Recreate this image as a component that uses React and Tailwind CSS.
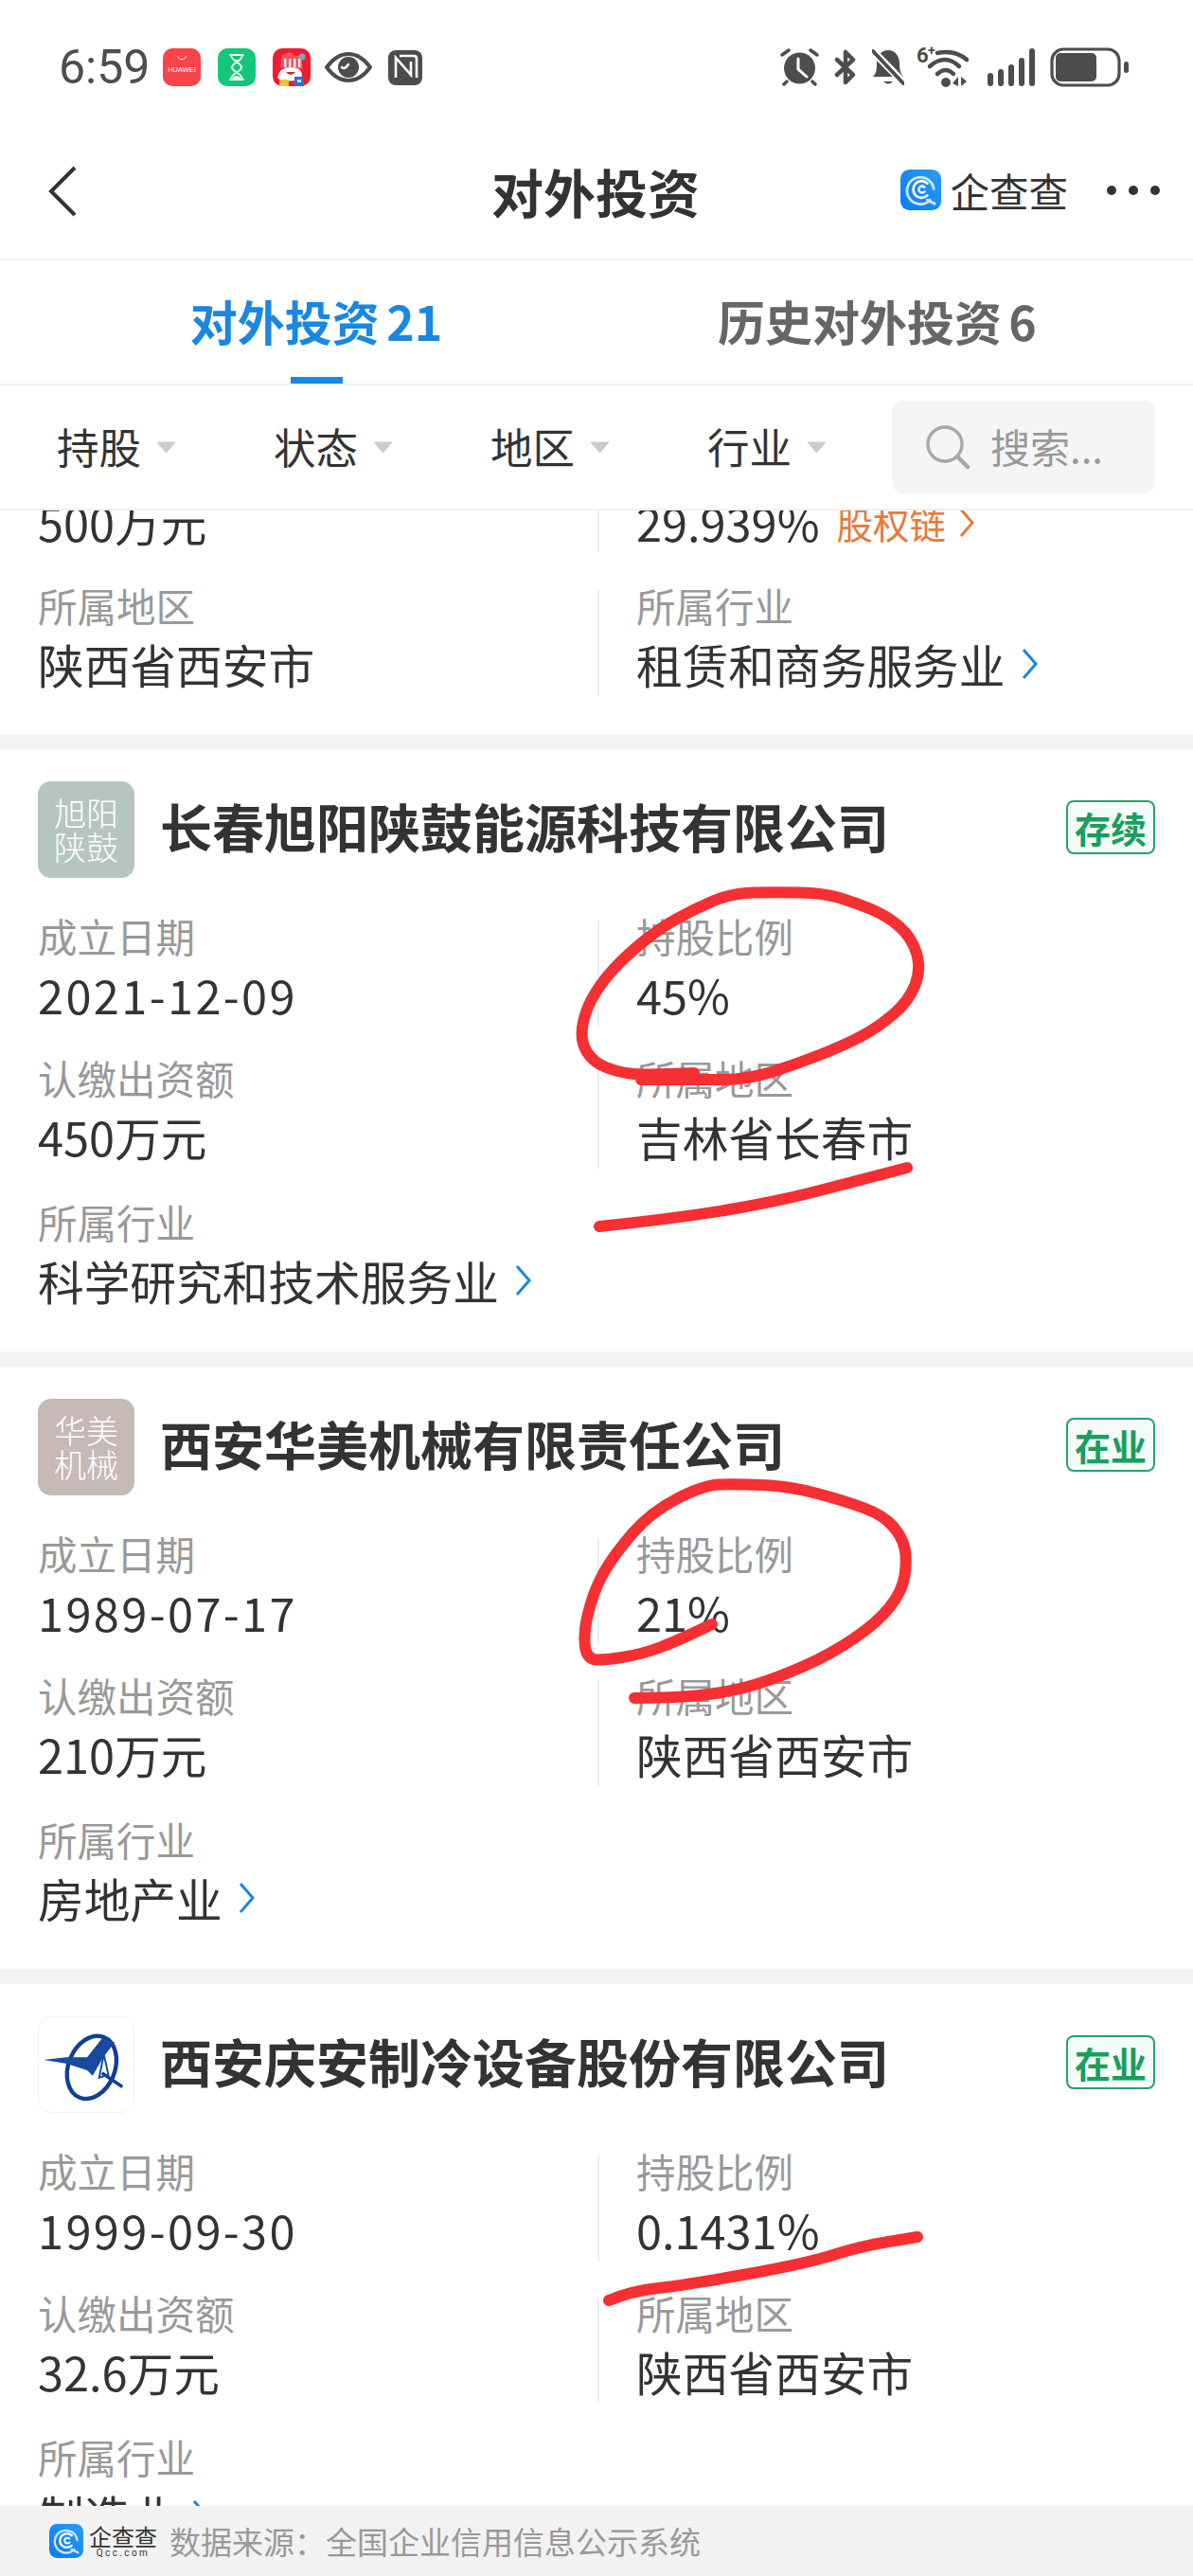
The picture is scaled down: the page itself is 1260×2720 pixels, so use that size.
import React from 'react';

const dark = '#4d4d4d';

// hand-drawn marks on the screenshot, traced in page pixels
const strokes = [
  [[677,1140],[733,1140],[790,1140],[843,1123],[893,1103],[927,1085],[960,1057],[973,1023],[963,990],[937,967],[903,953],[870,943],[820,942],[773,943],[733,960],[697,980],[660,1010],[633,1040],[617,1070],[613,1100],[627,1122],[653,1132],[677,1135],[733,1133]],
  [[633,1295],[727,1285],[827,1267],[893,1250],[958,1233]],
  [[752,1715],[717,1732],[677,1747],[637,1753],[623,1752],[617,1740],[618,1713],[630,1673],[650,1640],[687,1597],[743,1568],[777,1567],[833,1569],[893,1585],[933,1600],[953,1623],[958,1647],[953,1680],[927,1713],[877,1747],[820,1772],[777,1785],[727,1792],[670,1793]],
  [[643,2429],[667,2419],[723,2413],[852,2390],[908,2372],[969,2362]],
];

function smooth(pts) {
  let d = `M${pts[0][0]} ${pts[0][1]}`;
  for (let i = 1; i < pts.length - 1; i++) {
    const mx = (pts[i][0] + pts[i + 1][0]) / 2;
    const my = (pts[i][1] + pts[i + 1][1]) / 2;
    d += ` Q${pts[i][0]} ${pts[i][1]} ${mx} ${my}`;
  }
  const last = pts[pts.length - 1];
  return d + ` L${last[0]} ${last[1]}`;
}

function HuaweiIcon() {
  return (
    <div className="w-[40px] h-[40px] rounded-[10px] bg-[#f8444a] flex flex-col items-center">
      <svg width="14" height="8" viewBox="0 0 14 8" className="mt-[7px]">
        <path d="M2 1 Q7 9 12 1" fill="none" stroke="#fff" strokeWidth="1" />
      </svg>
      <span className="text-[7.5px] leading-[10px] mt-[3px] text-white font-['Liberation_Sans',sans-serif]">HUAWEI</span>
    </div>
  );
}

function TimerIcon() {
  return (
    <div className="w-[40px] h-[40px] rounded-[10px] bg-[#12c878] flex items-center justify-center">
      <svg width="20" height="30" viewBox="0 0 20 30">
        <path d="M3 2h14M3 28h14M4 2c0 7 11 8 11 13S4 21 4 28M16 2c0 7-11 8-11 13s11 6 11 13" fill="none" stroke="#fff" strokeWidth="1.8" strokeLinecap="round" />
        <path d="M7 7h6l-3 4zM5 27q5-6 10 0z" fill="#fff" />
      </svg>
    </div>
  );
}

function PromoIcon() {
  return (
    <svg width="40" height="40" viewBox="0 0 40 40">
      <rect width="40" height="40" rx="10" fill="#ee1c2e" />
      <path d="M8 20 L10 7 L18 4 L24 8 L30 8 L32 22 Z" fill="#f4515e" />
      <rect x="12" y="11" width="2.4" height="9" fill="#fff" />
      <rect x="17" y="11" width="2.4" height="9" fill="#fff" />
      <rect x="22" y="11" width="2.4" height="9" fill="#fff" />
      <rect x="27" y="11" width="2.4" height="9" fill="#fff" />
      <circle cx="31" cy="9" r="3.5" fill="#7fa5c9" />
      <path d="M5 31 Q7 20 18 20 Q31 20 31 29 L26 34 L10 35 Z" fill="#fff" />
      <path d="M14 25 Q19 31 24 25 Z" fill="#d8202c" />
      <rect x="7" y="33" width="10" height="7" fill="#f2c230" />
      <rect x="23" y="30" width="10" height="10" fill="#2c6fd0" />
      <rect x="26" y="33" width="4" height="3" fill="#cfe2f8" />
    </svg>
  );
}

function EyeIcon() {
  return (
    <svg width="52" height="34" viewBox="0 0 52 34">
      <path d="M3 17 C11 6 18 3 26 3 C34 3 41 6 49 17 C41 28 34 31 26 31 C18 31 11 28 3 17 Z" fill="none" stroke={dark} strokeWidth="4" strokeLinejoin="round" />
      <circle cx="26" cy="17" r="11" fill={dark} />
      <path d="M19 17 Q22 20 26 14" fill="none" stroke="#fff" strokeWidth="2.5" strokeLinecap="round" />
    </svg>
  );
}

function NfcIcon() {
  return (
    <svg width="36" height="37" viewBox="0 0 36 37">
      <rect width="36" height="37" rx="8" fill={dark} />
      <path d="M8 29 V8 L24 26 V12 M12 6 H27 Q30 6 30 9 V29" fill="none" stroke="#fff" strokeWidth="2.6" />
    </svg>
  );
}

function AlarmIcon() {
  return (
    <svg width="41" height="40" viewBox="0 0 41 40">
      <circle cx="20.5" cy="21" r="16.5" fill={dark} />
      <path d="M2 7 L9 2 M32 2 L39 7 M7 35 L4 38 M34 35 L37 38" stroke={dark} strokeWidth="3.5" strokeLinecap="round" />
      <path d="M19 11 V22 L28 30" fill="none" stroke="#fff" strokeWidth="3" strokeLinecap="round" />
    </svg>
  );
}

function BluetoothIcon() {
  return (
    <svg width="24" height="40" viewBox="0 0 24 40">
      <path d="M3 28 L20 12 L12 4 V36 L20 28 L3 12" fill="none" stroke={dark} strokeWidth="4.5" strokeLinecap="round" strokeLinejoin="round" />
    </svg>
  );
}

function BellOffIcon() {
  return (
    <svg width="34" height="40" viewBox="0 0 34 40">
      <path d="M17 2 C25 2 29 9 29 16 C29 24 31 27 33 30 H1 C4 27 5 24 5 16 C5 9 9 2 17 2 Z" fill={dark} />
      <path d="M12 35 Q17 40 22 35 Z" fill={dark} />
      <path d="M-1 1 L34 37" stroke="#fff" strokeWidth="8" />
      <path d="M1 3 L33 37" stroke={dark} strokeWidth="4" strokeLinecap="round" />
    </svg>
  );
}

function WifiIcon() {
  return (
    <div className="relative w-[55px] h-[42px]">
      <span className="absolute left-0 top-[-3px] text-[22px] leading-[24px] font-bold text-[#4d4d4d] font-['Roboto',sans-serif]">6</span>
      <span className="absolute left-[12px] top-[-5px] text-[14px] leading-[16px] font-bold text-[#4d4d4d] font-['Roboto',sans-serif]">+</span>
      <svg width="55" height="42" viewBox="0 0 55 42">
        <path d="M22 6 Q40 2 53 13" fill="none" stroke={dark} strokeWidth="4.5" strokeLinecap="round" />
        <path d="M14 20 Q30 6 45 20" fill="none" stroke={dark} strokeWidth="4.5" strokeLinecap="round" />
        <path d="M22 28 Q31 20 39 28" fill="none" stroke={dark} strokeWidth="4.5" strokeLinecap="round" />
        <circle cx="31" cy="37" r="5" fill={dark} />
        <path d="M44 31 V41 L38 38 Z M47 31 V41 L53 36 Z" fill={dark} />
      </svg>
    </div>
  );
}

function SignalIcon() {
  return (
    <svg width="51" height="40" viewBox="0 0 51 40">
      <rect x="0" y="26" width="6" height="14" rx="3" fill={dark} />
      <rect x="11" y="22" width="6" height="18" rx="3" fill={dark} />
      <rect x="22" y="17" width="6" height="23" rx="3" fill={dark} />
      <rect x="33" y="10" width="6" height="30" rx="3" fill={dark} />
      <rect x="44" y="0" width="6" height="40" rx="3" fill={dark} />
    </svg>
  );
}

function BatteryIcon() {
  return (
    <svg width="83" height="42" viewBox="0 0 83 42">
      <rect x="2" y="2" width="71" height="38" rx="12" fill="none" stroke={dark} strokeWidth="3.2" />
      <rect x="6" y="6" width="43" height="30" rx="5" fill={dark} />
      <rect x="78" y="15" width="5" height="12" rx="2.5" fill={dark} />
    </svg>
  );
}

function QccLogo({ size }) {
  return (
    <svg width={size} height={size} viewBox="0 0 44 44" className="shrink-0">
      <defs>
        <linearGradient id="qcc" x1="0" y1="1" x2="1" y2="0">
          <stop offset="0" stopColor="#0a7bf2" />
          <stop offset="1" stopColor="#2a9cf5" />
        </linearGradient>
      </defs>
      <rect width="44" height="44" rx="10" fill="url(#qcc)" />
      <path d="M32 33 A14.5 14.5 0 1 1 36 21" fill="none" stroke="#cfe8fb" strokeWidth="2.8" strokeLinecap="round" />
      <path d="M29 15 A9 9 0 1 0 29 28" fill="none" stroke="#fff" strokeWidth="2.8" strokeLinecap="round" />
      <path d="M26 19 A3.6 3.6 0 1 0 26 24" fill="none" stroke="#fff" strokeWidth="2.4" strokeLinecap="round" />
      <path d="M29 33 L37 37" stroke="#cfe8fb" strokeWidth="3" strokeLinecap="round" />
    </svg>
  );
}

function PlaneLogo() {
  return (
    <div className="w-[102px] h-[102px] rounded-[14px] border border-[#f1f1f1] bg-white shrink-0">
      <svg width="100" height="100" viewBox="0 0 102 102">
        <ellipse cx="57" cy="54" rx="25" ry="35" transform="rotate(22 57 54)" fill="none" stroke="#123f92" strokeWidth="4.5" />
        <path d="M5 46 L30 43 L52 43 L68 23 L82 27 L70 42 L58 63 L52 57 L30 50 Z" fill="#154a9f" />
        <path d="M70 40 L65 65 L75 62 Z" fill="#fff" stroke="#154a9f" strokeWidth="2" />
        <path d="M68 60 L90 75" stroke="#123f92" strokeWidth="3.5" />
      </svg>
    </div>
  );
}

function TextLogo({ top, bottom, bg }) {
  return (
    <div className={`w-[102px] h-[102px] rounded-[14px] shrink-0 flex flex-col items-center justify-center text-white text-[34px] leading-[36px] font-light ${bg}`}>
      <span>{top}</span>
      <span>{bottom}</span>
    </div>
  );
}

function Chevron({ color }) {
  return (
    <svg width="19" height="34" viewBox="0 0 19 34" className="shrink-0">
      <path d="M3 2 L16 17 L3 32" fill="none" stroke={color} strokeWidth="3" />
    </svg>
  );
}

function Field({ label, children, date }) {
  return (
    <div className="flex flex-col">
      <span className="text-[41.5px] leading-[52px] text-[#999999]">{label}</span>
      <div className={`mt-[6px] h-[60px] flex items-center gap-[16px] text-[48.7px] leading-[60px] text-[#333333] whitespace-nowrap ${date ? 'tracking-[2.4px]' : ''}`}>
        {children}
      </div>
    </div>
  );
}

function Row({ left, right }) {
  return (
    <div className="flex">
      <div className="w-[591px]">{left}</div>
      <div className="w-[2px] h-[112px] mt-[10px] bg-[#eeeeee]" />
      <div className="ml-[39px]">{right}</div>
    </div>
  );
}

function Card({ logo, name, status, date, capital, ratio, region, industry }) {
  return (
    <section className="bg-white h-[636px] px-[40px] pt-[34px] mb-[16px]">
      <div className="flex items-center">
        {logo}
        <h2 className="ml-[27px] mb-[10px] flex-1 text-[55px] leading-[70px] font-bold text-[#333333] whitespace-nowrap">{name}</h2>
        <span className="mb-[5px] w-[94px] h-[57px] rounded-[8px] border-[2.5px] border-[#27a26e] bg-[#f4fbf8] flex items-center justify-center text-[38px] leading-none font-bold text-[#17a05e]">
          {status}
        </span>
      </div>
      <div className="mt-[35px] flex flex-col gap-[28px]">
        <Row
          left={<Field label="成立日期" date>{date}</Field>}
          right={<Field label="持股比例">{ratio}</Field>}
        />
        <Row
          left={<Field label="认缴出资额">{capital}</Field>}
          right={<Field label="所属地区">{region}</Field>}
        />
        <div className="mt-[2px]">
          <Field label="所属行业">
            {industry}
            <Chevron color="#1a87e0" />
          </Field>
        </div>
      </div>
    </section>
  );
}

function Filter({ label, width }) {
  return (
    <div className={`flex items-center gap-[16px] ${width}`}>
      <span className="mb-[3px] text-[44.5px] leading-[60px] text-[#333333]">{label}</span>
      <svg width="21" height="13" viewBox="0 0 21 13">
        <path d="M1 1 H20 L10.5 12 Z" fill="#cccccc" stroke="#cccccc" strokeLinejoin="round" />
      </svg>
    </div>
  );
}

export default function App() {
  return (
    <div className="relative w-[1260px] h-[2720px] overflow-hidden bg-white flex flex-col font-['Noto_Sans_CJK_SC','Noto_Sans',sans-serif]">
      <div className="h-[142px] shrink-0 flex items-center pl-[62px] pr-[68px]">
        <span className="w-[110px] text-[50px] leading-none text-[#4d4d4d] font-['Roboto',sans-serif]">6:59</span>
        <div className="flex items-center">
          <HuaweiIcon />
          <div className="ml-[18px]"><TimerIcon /></div>
          <div className="ml-[18px]"><PromoIcon /></div>
          <div className="ml-[14px]"><EyeIcon /></div>
          <div className="ml-[16px]"><NfcIcon /></div>
        </div>
        <div className="ml-auto flex items-center">
          <AlarmIcon />
          <div className="ml-[16px]"><BluetoothIcon /></div>
          <div className="ml-[16px]"><BellOffIcon /></div>
          <div className="ml-[13px]"><WifiIcon /></div>
          <div className="ml-[20px]"><SignalIcon /></div>
          <div className="ml-[15px]"><BatteryIcon /></div>
        </div>
      </div>

      <header className="h-[133px] shrink-0 flex items-center pl-[50px] pr-[35px] pb-[14px] border-b-2 border-[#f0f0f0]">
        <svg width="32" height="54" viewBox="0 0 32 54" className="mt-[2px]">
          <path d="M29 2 L4 27 L29 52" fill="none" stroke="#333333" strokeWidth="4" />
        </svg>
        <h1 className="ml-[437px] text-[55px] leading-[70px] font-bold text-[#333333]">对外投资</h1>
        <div className="ml-auto flex items-center">
          <QccLogo size={43} />
          <span className="ml-[9px] text-[41.5px] leading-[50px] text-[#333333]">企查查</span>
          <div className="ml-[41px] flex gap-[13px]">
            <span className="w-[10px] h-[10px] rounded-full bg-[#333333]" />
            <span className="w-[10px] h-[10px] rounded-full bg-[#333333]" />
            <span className="w-[10px] h-[10px] rounded-full bg-[#333333]" />
          </div>
        </div>
      </header>

      <div className="h-[132px] shrink-0 flex border-b-2 border-[#f0f0f0]">
        <div className="w-[668px] h-[130px] flex flex-col items-center pt-[33px]">
          <span className="text-[50px] leading-[60px] font-bold text-[#1a87e0] whitespace-nowrap [word-spacing:-4px]">对外投资 21</span>
          <span className="mt-[30px] w-[55px] h-[7px] bg-[#1a87e0]" />
        </div>
        <div className="ml-[90px] pt-[33px]">
          <span className="text-[50px] leading-[60px] font-bold text-[#666666] whitespace-nowrap [word-spacing:-4px]">历史对外投资 6</span>
        </div>
      </div>

      <div className="h-[132px] shrink-0 flex items-center pl-[60px] border-b-2 border-[#f0f0f0] bg-white">
        <Filter label="持股" width="w-[229px]" />
        <Filter label="状态" width="w-[229px]" />
        <Filter label="地区" width="w-[229px]" />
        <Filter label="行业" width="w-[195px]" />
        <div className="w-[278px] h-[98px] rounded-[12px] bg-[#f5f5f5] flex items-center pl-[34px]">
          <svg width="50" height="48" viewBox="0 0 50 48">
            <circle cx="22" cy="21" r="18" fill="none" stroke="#a8a8a8" strokeWidth="3.4" />
            <path d="M35 34 L46 45" stroke="#a8a8a8" strokeWidth="4.5" strokeLinecap="round" />
          </svg>
          <span className="ml-[20px] mb-[3px] text-[42px] leading-[60px] text-[#999999] whitespace-nowrap">搜索...</span>
        </div>
      </div>

      <main className="flex-1 min-h-0 overflow-hidden bg-[#f3f3f3]">
        <section className="bg-white h-[236px] px-[40px] mb-[16px] flex flex-col">
          <div className="flex -mt-[18px]">
            <div className="w-[591px] text-[48.7px] leading-[60px] text-[#333333]">500万元</div>
            <div className="w-[2px] h-[62px] bg-[#eeeeee]" />
            <div className="ml-[39px] flex items-center gap-[18px] h-[60px] text-[48.7px] leading-[60px] text-[#333333] whitespace-nowrap">
              29.939%
              <span className="flex items-center gap-[14px] mt-[2px] text-[38.5px] text-[#e8793a]">
                股权链
                <svg width="17" height="34" viewBox="0 0 17 34">
                  <path d="M2 3 L14 17 L2 31" fill="none" stroke="#e8793a" strokeWidth="3" />
                </svg>
              </span>
            </div>
          </div>
          <div className="mt-[30px]">
            <Row
              left={<Field label="所属地区">陕西省西安市</Field>}
              right={
                <Field label="所属行业">
                  租赁和商务服务业
                  <Chevron color="#1a87e0" />
                </Field>
              }
            />
          </div>
        </section>

        <Card
          logo={<TextLogo top="旭阳" bottom="陕鼓" bg="bg-[#b5c6bf]" />}
          name="长春旭阳陕鼓能源科技有限公司"
          status="存续"
          date="2021-12-09"
          capital="450万元"
          ratio="45%"
          region="吉林省长春市"
          industry="科学研究和技术服务业"
        />
        <Card
          logo={<TextLogo top="华美" bottom="机械" bg="bg-[#c6b9b6]" />}
          name="西安华美机械有限责任公司"
          status="在业"
          date="1989-07-17"
          capital="210万元"
          ratio="21%"
          region="陕西省西安市"
          industry="房地产业"
        />
        <Card
          logo={<PlaneLogo />}
          name="西安庆安制冷设备股份有限公司"
          status="在业"
          date="1999-09-30"
          capital="32.6万元"
          ratio="0.1431%"
          region="陕西省西安市"
          industry="制造业"
        />
      </main>

      <footer className="h-[74px] shrink-0 bg-[#f2f2f2] flex items-center pl-[52px]">
        <QccLogo size={36} />
        <div className="ml-[5px] w-[74px] flex flex-col items-center">
          <span className="text-[24px] leading-[24px] text-[#333333]">企查查</span>
          <span className="text-[10px] leading-[11px] tracking-[2.4px] text-[#333333] font-['Roboto',sans-serif]">Qcc.com</span>
        </div>
        <span className="ml-[12px] text-[33px] leading-[40px] text-[#999999] whitespace-nowrap">数据来源：全国企业信用信息公示系统</span>
      </footer>

      <svg width="1260" height="2720" viewBox="0 0 1260 2720" className="absolute left-0 top-0 pointer-events-none">
        {strokes.map((pts, i) => (
          <path key={i} d={smooth(pts)} fill="none" stroke="#f52f32" strokeWidth="12" strokeLinecap="round" strokeLinejoin="round" />
        ))}
      </svg>
    </div>
  );
}
